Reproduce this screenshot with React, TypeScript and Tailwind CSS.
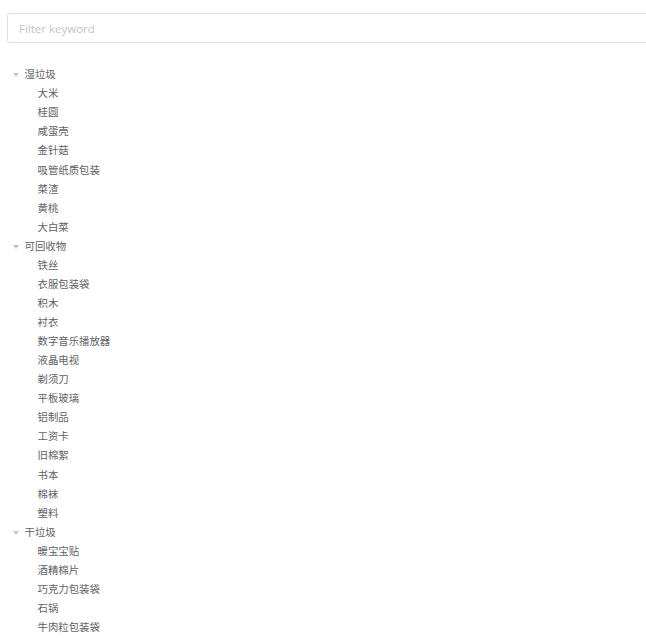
import { useState } from "react";

const data = [
  {
    label: "湿垃圾",
    children: ["大米", "桂圆", "咸蛋壳", "金针菇", "吸管纸质包装", "菜渣", "黄桃", "大白菜"],
  },
  {
    label: "可回收物",
    children: [
      "铁丝",
      "衣服包装袋",
      "积木",
      "衬衣",
      "数字音乐播放器",
      "液晶电视",
      "剃须刀",
      "平板玻璃",
      "铝制品",
      "工资卡",
      "旧棉絮",
      "书本",
      "棉袜",
      "塑料",
    ],
  },
  {
    label: "干垃圾",
    children: ["暖宝宝贴", "酒精棉片", "巧克力包装袋", "石锅", "牛肉粒包装袋"],
  },
];

function Caret() {
  return (
    <span className="w-[17.5px] h-full flex items-center justify-center">
      <svg width="6" height="4" viewBox="0 0 6 4" className="ml-[1px]">
        <path d="M0 0 L6 0 L3 4 Z" fill="#c0c4cc" />
      </svg>
    </span>
  );
}

export default function App() {
  const [keyword, setKeyword] = useState("");

  return (
    <div
      className="w-[646px] h-[638px] overflow-hidden bg-white text-[#606266]"
      style={{ fontFamily: '"Liberation Sans", "Noto Sans CJK SC", sans-serif' }}
    >
      <div className="pl-[7px] pt-[13px]">
        <input
          type="text"
          value={keyword}
          onChange={(e) => setKeyword(e.target.value)}
          placeholder="Filter keyword"
          className="w-[660px] h-[30px] px-[11px] border border-[#dcdfe6] rounded-[3px] text-[11.5px] text-[#606266] placeholder-[#c0c4cc] outline-none"
          style={{ fontFamily: '"Open Sans", "Noto Sans CJK SC", sans-serif' }}
        />
      </div>

      <div className="pl-[7px] mt-[22.5px] text-[10.4px]">
        {data.map((group) => (
          <div key={group.label}>
            <div className="h-[19.07px] flex items-center">
              <Caret />
              <span>{group.label}</span>
            </div>
            {group.children.map((item) => (
              <div key={item} className="h-[19.07px] flex items-center pl-[13px]">
                <span className="w-[17.5px]" />
                <span>{item}</span>
              </div>
            ))}
          </div>
        ))}
      </div>
    </div>
  );
}
